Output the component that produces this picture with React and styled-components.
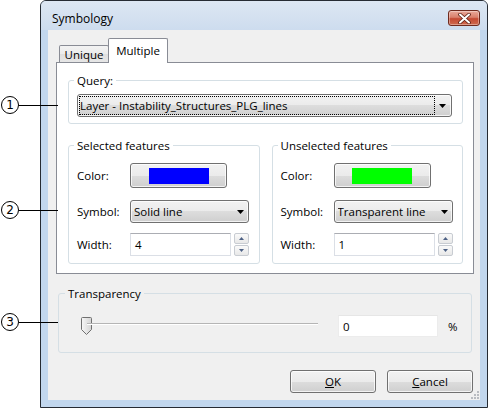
import React from 'react';
import styled, { createGlobalStyle } from 'styled-components';

const GlobalStyle = createGlobalStyle`
  html, body {
    margin: 0;
    background: #fff;
  }
  body {
    font-family: "Open Sans", "Noto Sans", sans-serif;
    font-size: 11.5px;
    color: #000;
  }
`;

const Page = styled.div`
  position: relative;
  width: 490px;
  height: 408px;
  padding-left: 40px;
  box-sizing: border-box;
  overflow: hidden;
`;

const Window = styled.div`
  width: 448px;
  height: 408px;
  box-sizing: border-box;
  border: 1px solid #262b33;
  border-radius: 6px 6px 0 0;
  background: #c2d7ee;
  display: flex;
  flex-direction: column;
`;

const TitleBar = styled.div`
  height: 29px;
  box-sizing: border-box;
  padding: 5px 7px 0 11px;
  display: flex;
  align-items: center;
  justify-content: space-between;
  background: linear-gradient(#dde7f3, #cddcee);
  border-radius: 5px 5px 0 0;
`;

const Title = styled.span`
  font-size: 12px;
  color: #000;
`;

const CloseButton = styled.div`
  width: 32px;
  height: 16px;
  box-sizing: border-box;
  border: 1px solid #6e2a1e;
  border-radius: 3px;
  background: linear-gradient(#e9a99b 0%, #d9806c 45%, #c44a33 55%, #cf6a4f 100%);
  box-shadow: inset 0 0 0 1px rgba(255, 255, 255, 0.35);
  display: flex;
  align-items: center;
  justify-content: center;
`;

const Client = styled.div`
  position: relative;
  flex: 1;
  margin: 0 7px 7px 7px;
  padding: 8px 6px 7px 8px;
  background: #f0f0f0;
  display: flex;
  flex-direction: column;
`;

const TabStrip = styled.div`
  height: 24px;
  padding-left: 3px;
  display: flex;
  align-items: flex-end;
`;

const Tab = styled.div`
  position: relative;
  box-sizing: border-box;
  display: flex;
  align-items: center;
  justify-content: center;
  border: 1px solid #898c95;
  border-bottom: none;
  border-radius: 2px 2px 0 0;
  width: ${(p) => (p.$active ? '60px' : '50px')};
  height: ${(p) => (p.$active ? '25px' : '17px')};
  margin-left: ${(p) => (p.$active ? '-1px' : '0')};
  margin-bottom: ${(p) => (p.$active ? '-1px' : '0')};
  padding-bottom: ${(p) => (p.$active ? '1px' : '0')};
  background: ${(p) => (p.$active ? '#fff' : 'linear-gradient(#f3f3f3, #ebebeb 50%, #dedede 50%, #e6e6e6)')};
  z-index: ${(p) => (p.$active ? 1 : 0)};
`;

const Panel = styled.div`
  border: 1px solid #898c95;
  background: #fff;
  padding: 10px 10px 9px 11px;
  display: flex;
  flex-direction: column;
`;

const GroupBox = styled.fieldset`
  margin: ${(p) => p.$margin || '0'};
  padding: ${(p) => p.$pad};
  min-width: 0;
  border: 1px solid #d5dfe5;
  border-radius: 3px;
`;

const Legend = styled.legend`
  padding: 0 3px;
  margin-left: -3px;
  line-height: 15px;
  font-size: 11.5px;
  color: #000;
`;

const TwoGroups = styled.div`
  margin-top: 14px;
  display: grid;
  grid-template-columns: 1fr 1fr;
  gap: 12px;
`;

const FieldRow = styled.div`
  display: grid;
  grid-template-columns: 53px auto;
  align-items: center;
  margin-top: ${(p) => p.$gap || 0}px;
`;

const Label = styled.span`
  line-height: 15px;
`;

const buttonFace = `
  box-sizing: border-box;
  border: 1px solid #707070;
  border-radius: 3px;
  background: linear-gradient(#f2f2f2 0%, #ebebeb 50%, #dddddd 50%, #cfcfcf 100%);
  box-shadow: inset 0 0 0 1px rgba(255, 255, 255, 0.75);
`;

const ColorButton = styled.div`
  ${buttonFace}
  width: 97px;
  height: 25px;
  display: flex;
  align-items: center;
  justify-content: center;
`;

const Swatch = styled.div`
  width: 60px;
  height: 16px;
  background: ${(p) => p.$color};
`;

const Select = styled.div`
  ${buttonFace}
  width: ${(p) => p.$width}px;
  height: 23px;
  display: flex;
  align-items: center;
  padding: 0 ${(p) => p.$arrowGap}px 0 ${(p) => p.$padLeft}px;
`;

const SelectText = styled.span`
  flex: 1;
  white-space: nowrap;
  overflow: hidden;
  line-height: 15px;
`;

const FocusRect = styled.div`
  flex: 0 0 ${(p) => p.$width}px;
  height: 19px;
  box-sizing: border-box;
  border: 1px dotted #000;
  display: flex;
  align-items: center;
  white-space: nowrap;
  overflow: hidden;
`;

const Spacer = styled.div`
  flex: 1;
`;

const SpinWrap = styled.div`
  display: flex;
  align-items: center;
  gap: 3px;
`;

const TextBox = styled.div`
  width: ${(p) => p.$width}px;
  height: ${(p) => p.$height}px;
  box-sizing: border-box;
  border: 1px solid ${(p) => (p.$faint ? '#ececec' : '#dbdfe6')};
  border-top-color: ${(p) => (p.$faint ? '#e6e6e6' : '#abadb3')};
  background: #fff;
  padding-left: 4px;
  margin-left: ${(p) => p.$offset || 0}px;
  display: flex;
  align-items: center;
`;

const SpinButtons = styled.div`
  display: flex;
  flex-direction: column;
  gap: 1px;
`;

const SpinButton = styled.div`
  width: 15px;
  height: 11px;
  box-sizing: border-box;
  border: 1px solid #c8ccd2;
  border-radius: 2px;
  background: linear-gradient(#fafafa, #e8e8e8);
  display: flex;
  align-items: center;
  justify-content: center;
`;

const SliderRow = styled.div`
  display: flex;
  align-items: center;
`;

const Slider = styled.div`
  width: 237px;
  height: 18px;
  margin-left: 13px;
  display: flex;
  align-items: flex-start;
`;

const Track = styled.div`
  flex: 1;
  height: 1px;
  margin: 6px 0 0 -5px;
  background: #b5b5b5;
  box-shadow: 0 1px 0 #fff;
`;

const Percent = styled.span`
  margin-left: 10px;
`;

const ButtonRow = styled.div`
  margin: 17px 1px 0 0;
  display: flex;
  justify-content: flex-end;
  gap: 11px;
`;

const PushButton = styled.div`
  ${buttonFace}
  width: 86px;
  height: 23px;
  display: flex;
  align-items: center;
  justify-content: center;
`;

const Grip = styled.svg`
  position: absolute;
  right: 1px;
  bottom: 1px;
`;

const Callout = styled.div`
  position: absolute;
  left: 1px;
  top: ${(p) => p.$y - 9}px;
  display: flex;
  align-items: center;
  z-index: 2;
`;

const Circle = styled.div`
  width: 18px;
  height: 18px;
  box-sizing: border-box;
  border: 1px solid #000;
  border-radius: 50%;
  display: flex;
  align-items: center;
  justify-content: center;
  font-family: "DejaVu Sans", "Liberation Sans", sans-serif;
  font-size: 12px;
  line-height: 1;
  background: #fff;
`;

const Leader = styled.div`
  width: 39px;
  height: 1px;
  background: #000;
`;

const DownArrow = ({ w = 7, h = 4, color = '#000' }) => (
  <svg width={w} height={h} viewBox={`0 0 ${w} ${h}`}>
    <polygon points={`0,0 ${w},0 ${w / 2},${h}`} fill={color} />
  </svg>
);

const UpArrow = ({ w = 5, h = 3, color = '#4d6185' }) => (
  <svg width={w} height={h} viewBox={`0 0 ${w} ${h}`}>
    <polygon points={`0,${h} ${w},${h} ${w / 2},0`} fill={color} />
  </svg>
);

const CloseGlyph = () => (
  <svg width="13" height="11" viewBox="0 0 13 11">
    <path
      d="M2 1.5 L11 9.5 M11 1.5 L2 9.5"
      stroke="#5a1f14"
      strokeWidth="3.6"
      strokeLinecap="round"
    />
    <path
      d="M2 1.5 L11 9.5 M11 1.5 L2 9.5"
      stroke="#fff"
      strokeWidth="2"
      strokeLinecap="round"
    />
  </svg>
);

const Thumb = () => (
  <svg width="11" height="18" viewBox="0 0 11 18">
    <defs>
      <linearGradient id="thumbFill" x1="0" y1="0" x2="1" y2="0">
        <stop offset="0" stopColor="#f7f7f7" />
        <stop offset="1" stopColor="#d4d4d4" />
      </linearGradient>
    </defs>
    <path
      d="M1.5 0.5 H9.5 Q10.5 0.5 10.5 1.5 V12.5 L5.5 17.5 L0.5 12.5 V1.5 Q0.5 0.5 1.5 0.5 Z"
      fill="url(#thumbFill)"
      stroke="#707070"
    />
  </svg>
);

const Spinner = ({ value }) => (
  <SpinWrap>
    <TextBox $width={101} $height={23}>
      {value}
    </TextBox>
    <SpinButtons>
      <SpinButton>
        <UpArrow />
      </SpinButton>
      <SpinButton>
        <DownArrow w={5} h={3} color="#4d6185" />
      </SpinButton>
    </SpinButtons>
  </SpinWrap>
);

const FeatureGroup = ({ title, color, symbol, width }) => (
  <GroupBox $pad="10px 9px 7px 8px">
    <Legend>{title}</Legend>
    <FieldRow>
      <Label>Color:</Label>
      <ColorButton>
        <Swatch $color={color} />
      </ColorButton>
    </FieldRow>
    <FieldRow $gap={12}>
      <Label>Symbol:</Label>
      <Select $width={119} $padLeft={3} $arrowGap={4}>
        <SelectText>{symbol}</SelectText>
        <DownArrow />
      </Select>
    </FieldRow>
    <FieldRow $gap={10}>
      <Label>Width:</Label>
      <Spinner value={width} />
    </FieldRow>
  </GroupBox>
);

const callouts = [
  { n: '1', y: 105 },
  { n: '2', y: 210 },
  { n: '3', y: 322 },
];

const App = () => (
  <Page>
    <GlobalStyle />
    {callouts.map((c) => (
      <Callout key={c.n} $y={c.y}>
        <Circle>{c.n}</Circle>
        <Leader />
      </Callout>
    ))}
    <Window>
      <TitleBar>
        <Title>Symbology</Title>
        <CloseButton>
          <CloseGlyph />
        </CloseButton>
      </TitleBar>
      <Client>
        <TabStrip>
          <Tab>Unique</Tab>
          <Tab $active>Multiple</Tab>
        </TabStrip>
        <Panel>
          <GroupBox $pad="6px 9px 6px 8px">
            <Legend>Query:</Legend>
            <Select $width={375} $padLeft={1} $arrowGap={5}>
              <FocusRect $width={356}>Layer - Instability_Structures_PLG_lines</FocusRect>
              <Spacer />
              <DownArrow />
            </Select>
          </GroupBox>
          <TwoGroups>
            <FeatureGroup title="Selected features" color="#0000ff" symbol="Solid line" width="4" />
            <FeatureGroup
              title="Unselected features"
              color="#00ff00"
              symbol="Transparent line"
              width="1"
            />
          </TwoGroups>
        </Panel>
        <GroupBox $pad="14px 9px 15px 9px" $margin="12px 2px 0 2px">
          <Legend>Transparency</Legend>
          <SliderRow>
            <Slider>
              <Thumb />
              <Track />
            </Slider>
            <TextBox $width={100} $height={22} $faint $offset={20}>
              0
            </TextBox>
            <Percent>%</Percent>
          </SliderRow>
        </GroupBox>
        <ButtonRow>
          <PushButton>
            <span>
              <u>O</u>K
            </span>
          </PushButton>
          <PushButton>
            <span>
              <u>C</u>ancel
            </span>
          </PushButton>
        </ButtonRow>
        <Grip width="8" height="8" viewBox="0 0 8 8">
          {[
            [6, 0],
            [6, 3],
            [3, 3],
            [6, 6],
            [3, 6],
            [0, 6],
          ].map(([x, y]) => (
            <rect key={`${x}-${y}`} x={x} y={y} width="2" height="2" fill="#b9bcc1" />
          ))}
        </Grip>
      </Client>
    </Window>
  </Page>
);

export default App;
